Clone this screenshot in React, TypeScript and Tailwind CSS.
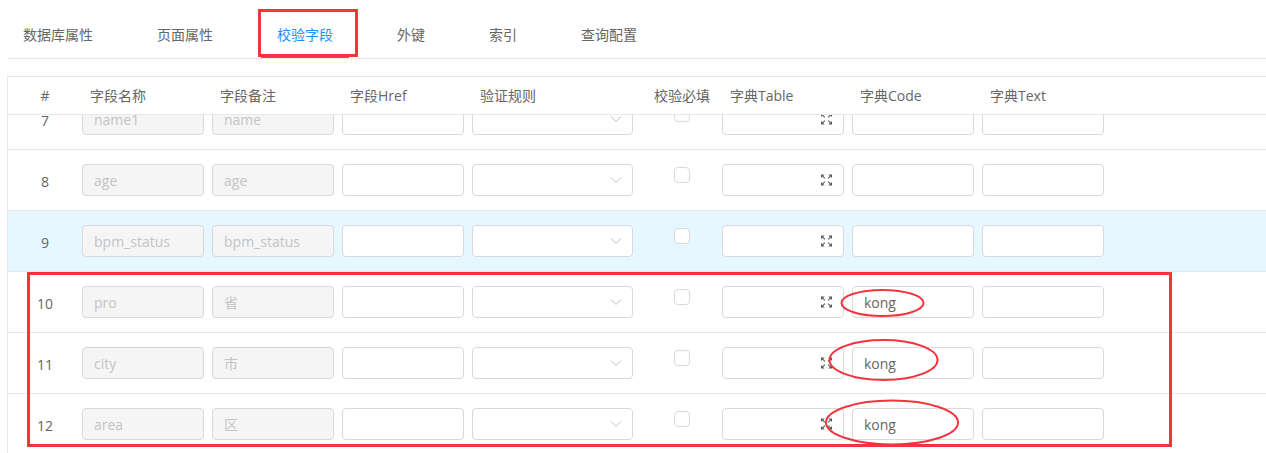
import React from 'react';

type Row = {
  no: number;
  name: string;
  remark: string;
  code?: string;
  active?: boolean;
};

const rows: Row[] = [
  { no: 7, name: 'name1', remark: 'name' },
  { no: 8, name: 'age', remark: 'age' },
  { no: 9, name: 'bpm_status', remark: 'bpm_status', active: true },
  { no: 10, name: 'pro', remark: '省', code: 'kong' },
  { no: 11, name: 'city', remark: '市', code: 'kong' },
  { no: 12, name: 'area', remark: '区', code: 'kong' },
];

const tabs = ['数据库属性', '页面属性', '校验字段', '外键', '索引', '查询配置'];

const ExpandIcon = () => (
  <svg width="13" height="12" viewBox="0 0 12 12" fill="#5a5a5a" stroke="#5a5a5a" strokeWidth="1.1">
    <path d="M0.5 0.5h3.6L0.5 4.1z" stroke="none" />
    <path d="M1.6 1.6l2.8 2.8" />
    <path d="M11.5 0.5H7.9l3.6 3.6z" stroke="none" />
    <path d="M10.4 1.6L7.6 4.4" />
    <path d="M0.5 11.5h3.6L0.5 7.9z" stroke="none" />
    <path d="M1.6 10.4l2.8-2.8" />
    <path d="M11.5 11.5H7.9l3.6-3.6z" stroke="none" />
    <path d="M10.4 10.4L7.6 7.6" />
  </svg>
);

const Chevron = () => (
  <svg width="12" height="12" viewBox="0 0 12 12" fill="none" stroke="#bfbfbf" strokeWidth="1">
    <path d="M1 3.5l5 5 5-5" />
  </svg>
);

const Input = ({ value, disabled, children }: { value?: string; disabled?: boolean; children?: React.ReactNode }) => (
  <div
    className={`w-[122px] h-8 rounded border border-[#d9d9d9] px-[11px] flex items-center justify-between text-sm ${
      disabled ? 'bg-[#f5f5f5] text-[#c4c4c4]' : 'bg-white text-[#666]'
    }`}
  >
    <span className="pt-[2px]">{value}</span>
    {children}
  </div>
);

const TableRow = ({ row }: { row: Row }) => (
  <div className={`flex h-[61px] border-b border-[#e8e8e8] ${row.active ? 'bg-[#e6f7ff]' : 'bg-white'}`}>
    <div className="w-[74px] flex items-center justify-center pt-[3px] text-sm text-[#666]">{row.no}</div>
    <div className="w-[130px] flex items-center">
      <Input value={row.name} disabled />
    </div>
    <div className="w-[130px] flex items-center">
      <Input value={row.remark} disabled />
    </div>
    <div className="w-[130px] flex items-center">
      <Input />
    </div>
    <div className="w-[170px] flex items-center">
      <div className="w-[161px] h-8 rounded border border-[#d9d9d9] bg-white flex items-center justify-end pr-[10px]">
        <Chevron />
      </div>
    </div>
    <div className="w-[80px] flex justify-center pt-[17px]">
      <div className="w-4 h-4 rounded-sm border border-[#d9d9d9] bg-white" />
    </div>
    <div className="w-[130px] flex items-center">
      <Input>
        <span className="-mr-[1px] flex">
          <ExpandIcon />
        </span>
      </Input>
    </div>
    <div className="w-[130px] flex items-center">
      <Input value={row.code} />
    </div>
    <div className="w-[130px] flex items-center">
      <Input />
    </div>
  </div>
);

const Annotations = () => (
  <svg className="absolute inset-0 pointer-events-none" width="1266" height="453" fill="none" stroke="#f5333d">
    <rect x="259.5" y="10.5" width="97" height="45" strokeWidth="3" />
    <rect x="28.5" y="273.5" width="1142" height="172" strokeWidth="3" />
    <ellipse cx="882.5" cy="303" rx="41" ry="13" strokeWidth="2" />
    <ellipse cx="883.5" cy="360" rx="54" ry="20" strokeWidth="2" />
    <ellipse cx="892" cy="422.5" rx="66" ry="22" strokeWidth="2" />
  </svg>
);

export default function App() {
  return (
    <div className="relative w-[1266px] h-[453px] overflow-hidden bg-white pl-[7px] font-['Open_Sans','Noto_Sans_CJK_SC',sans-serif]">
      <div className="mt-3 flex border-b border-[#e8e8e8]">
        {tabs.map((t, i) => (
          <div
            key={t}
            className={`px-4 pt-3 pb-[10px] mr-8 border-b-2 text-sm leading-[22px] ${
              i === 2 ? 'border-[#1890ff] text-[#1890ff]' : 'border-transparent text-[#666]'
            }`}
          >
            {t}
          </div>
        ))}
      </div>

      <div className="mt-[17px] border-l border-t border-[#e8e8e8]">
        <div className="flex h-[38px] border-b border-[#e8e8e8] text-sm text-[#666] items-center">
          <div className="w-[74px] text-center">#</div>
          <div className="w-[130px] pl-2">字段名称</div>
          <div className="w-[130px] pl-2">字段备注</div>
          <div className="w-[130px] pl-2">字段Href</div>
          <div className="w-[170px] pl-2">验证规则</div>
          <div className="w-[80px] text-center">校验必填</div>
          <div className="w-[130px] pl-2">字典Table</div>
          <div className="w-[130px] pl-2">字典Code</div>
          <div className="w-[130px] pl-2">字典Text</div>
        </div>
        <div className="h-[400px] overflow-hidden">
          <div className="-mt-[26px]">
            {rows.map((r) => (
              <TableRow key={r.no} row={r} />
            ))}
          </div>
        </div>
      </div>

      <Annotations />
    </div>
  );
}
